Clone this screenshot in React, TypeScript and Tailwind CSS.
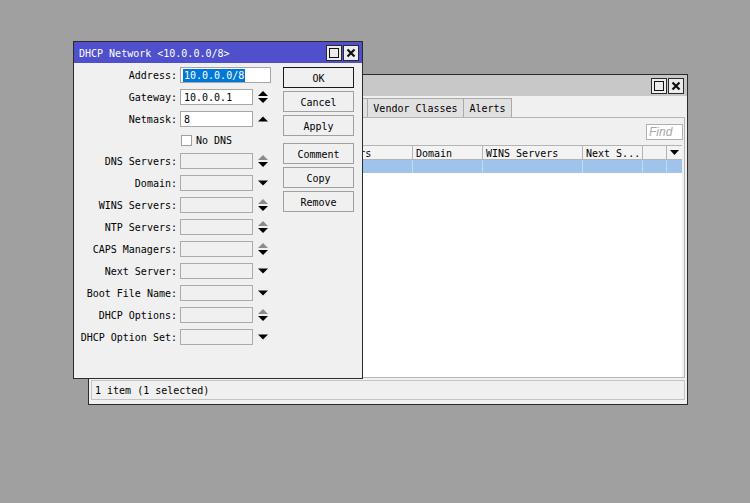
const font = "font-['DejaVu_Sans_Mono',monospace] text-[10px] leading-none text-black";

type SpinKind = "updown" | "up" | "down" | "grayup" | "none";

const Spin = ({ kind }: { kind: SpinKind }) => {
  if (kind === "none") return null;
  const upFill = kind === "grayup" ? "#8c8c8c" : "#000";
  return (
    <svg width="10" height="12" viewBox="0 0 10 12" className="ml-[5px] shrink-0">
      {kind === "up" && <polygon points="0,8.5 5,3.5 10,8.5" fill="#000" />}
      {kind === "down" && <polygon points="0,3.5 10,3.5 5,8.5" fill="#000" />}
      {(kind === "updown" || kind === "grayup") && (
        <>
          <polygon points="0,5 5,0 10,5" fill={upFill} />
          <polygon points="0,7 10,7 5,12" fill="#000" />
        </>
      )}
    </svg>
  );
};

const WinButtons = () => (
  <div className="flex gap-[1px]">
    <div className="w-[16px] h-[16px] border border-[#2a2a2a] bg-[#ececec] flex items-center justify-center">
      <div className="w-[10px] h-[10px] border-[1.5px] border-[#111]" />
    </div>
    <div className="w-[16px] h-[16px] border border-[#2a2a2a] bg-[#ececec] flex items-center justify-center">
      <svg width="10" height="10" viewBox="0 0 10 10">
        <path d="M1.5 1.5 L8.5 8.5 M8.5 1.5 L1.5 8.5" stroke="#111" strokeWidth="2.2" />
      </svg>
    </div>
  </div>
);

type Row = { label: string; value?: string; spin: SpinKind; wide?: boolean; selected?: boolean };

const rows: Row[] = [
  { label: "Address", value: "10.0.0.0/8", spin: "none", wide: true, selected: true },
  { label: "Gateway", value: "10.0.0.1", spin: "updown" },
  { label: "Netmask", value: "8", spin: "up" },
];

const emptyRows: Row[] = [
  { label: "DNS Servers", spin: "grayup" },
  { label: "Domain", spin: "down" },
  { label: "WINS Servers", spin: "grayup" },
  { label: "NTP Servers", spin: "grayup" },
  { label: "CAPS Managers", spin: "grayup" },
  { label: "Next Server", spin: "down" },
  { label: "Boot File Name", spin: "down" },
  { label: "DHCP Options", spin: "grayup" },
  { label: "DHCP Option Set", spin: "down" },
];

const FieldRow = ({ row }: { row: Row }) => (
  <div className="h-[22px] flex items-center">
    <span className="w-[103px] text-right whitespace-nowrap relative top-[1px]">{row.label}:</span>
    <div
      className={`ml-[3px] h-[16px] border flex items-center pl-[2px] ${row.wide ? "w-[91px]" : "w-[73px]"} ${
        row.value !== undefined ? "bg-white border-[#a6a6a6]" : "bg-[#f0f0f0] border-[#ababab]"
      }`}
    >
      {row.value !== undefined &&
        (row.selected ? (
          <span className="bg-[#0078d7] text-white px-[1px] pt-[2px] pb-[1px] relative top-[0.5px]">{row.value}</span>
        ) : (
          <span className="px-[1px] relative top-[1px]">{row.value}</span>
        ))}
    </div>
    <Spin kind={row.spin} />
  </div>
);

const Btn = ({ label, primary }: { label: string; primary?: boolean }) => (
  <div
    className={`h-[21px] w-[71px] flex items-center justify-center bg-[#f0f0f0] border ${
      primary ? "border-[#1a1a1a]" : "border-[#a0a0a0]"
    }`}
  >
    <span className="relative top-[1px]">{label}</span>
  </div>
);

// tabs hidden behind the front window are drawn without their captions
const tabs = [
  { name: "", w: "w-[36px]" },
  { name: "", w: "w-[60px]" },
  { name: "", w: "w-[48px]" },
  { name: "", w: "w-[54px]" },
  { name: "", w: "w-[78px]" },
  { name: "Vendor Classes", w: "w-[96px]" },
  { name: "Alerts", w: "w-[48px]" },
];

const cols = [
  { name: "", w: "w-[10px]" },
  { name: "", w: "w-[110px]" },
  { name: "", w: "w-[90px]" },
  { name: "DNS Servers", w: "w-[111px]" },
  { name: "Domain", w: "w-[70px]" },
  { name: "WINS Servers", w: "w-[100px]" },
  { name: "Next S...", w: "w-[60px]" },
  { name: "", w: "w-[24px]" },
];

export default function App() {
  return (
    <div className={`relative w-[750px] h-[503px] bg-[#a0a0a0] overflow-hidden ${font}`}>
      {/* back window: DHCP Server */}
      <div className="absolute left-[88px] top-[74px] w-[600px] h-[331px] border border-[#2b2b2b] bg-[#f0f0f0] flex flex-col">
        <div className="h-[21px] bg-[#c8c8c8] flex items-center justify-end pl-[5px] pr-[3px] shrink-0">
          <WinButtons />
        </div>
        <div className="flex-1 flex flex-col px-[2px] pt-[2px] pb-[4px]">
          <div className="flex h-[19px] pl-[1px] shrink-0">
            {tabs.map((t, i) => (
              <div
                key={i}
                className={`${t.w} h-full flex items-center justify-center border-t border-r border-[#a9a9a9] ${
                  i === 1 ? "bg-[#f0f0f0]" : "bg-[#e1e1e1]"
                } ${i === 0 ? "border-l" : ""}`}
              >
                <span className="relative top-[1px]">{t.name}</span>
              </div>
            ))}
          </div>
          <div className="h-[261px] border border-[#b4b4b4] flex flex-col">
            <div className="h-[27px] flex items-center justify-end pr-[1px] shrink-0">
              <div className="w-[37px] h-[16px] bg-white border border-[#b0b0b0] flex items-center pl-[2px]">
                <span className="italic text-[#a8a8a8] font-['Liberation_Sans',sans-serif] text-[12px]">Find</span>
              </div>
            </div>
            <div className="w-[590px] flex-1 flex flex-col bg-white">
              <div className="flex h-[15px] bg-[#f3f3f3] border-y border-[#b4b4b4] shrink-0">
                {cols.map((c, i) => (
                  <div key={i} className={`${c.w} h-full border-r border-[#b4b4b4] flex items-center pl-[3px] whitespace-nowrap overflow-hidden`}>
                    <span className="relative top-[1px]">{c.name}</span>
                  </div>
                ))}
                <div className="w-[15px] h-full flex items-center justify-center">
                  <svg width="9" height="5" viewBox="0 0 9 5">
                    <polygon points="0,0 9,0 4.5,5" fill="#000" />
                  </svg>
                </div>
              </div>
              <div className="flex h-[13px] bg-[#9fc3ea] shrink-0">
                {cols.map((c, i) => (
                  <div key={i} className={`${c.w} h-full border-r border-[#c4daf2]`} />
                ))}
                <div className="w-[15px] h-full" />
              </div>
            </div>
          </div>
          <div className="mt-[2px] h-[20px] border border-[#c4c4c4] flex items-center pl-[3px]">
            <span className="relative top-[1px]">1 item (1 selected)</span>
          </div>
        </div>
      </div>

      {/* front window: DHCP Network */}
      <div className="absolute left-[73px] top-[41px] w-[290px] h-[338px] border border-[#2b2b2b] bg-[#f0f0f0] flex flex-col">
        <div className="h-[21px] bg-[#5050cc] flex items-center justify-between pl-[5px] pr-[3px] shrink-0">
          <span className="text-white relative top-[1px]">DHCP Network &lt;10.0.0.0/8&gt;</span>
          <WinButtons />
        </div>
        <div className="flex flex-1">
          <div className="w-[209px] flex flex-col pt-[1px]">
            {rows.map((r) => (
              <FieldRow key={r.label} row={r} />
            ))}
            <div className="h-[20px] flex items-center">
              <div className="w-[103px]" />
              <div className="ml-[4px] w-[11px] h-[11px] bg-white border border-[#a0a0a0]" />
              <span className="ml-[4px] relative top-[1px]">No DNS</span>
            </div>
            {emptyRows.map((r) => (
              <FieldRow key={r.label} row={r} />
            ))}
          </div>
          <div className="w-[71px] flex flex-col pt-[4px]">
            <div className="flex flex-col gap-[3px]">
              <Btn label="OK" primary />
              <Btn label="Cancel" />
              <Btn label="Apply" />
            </div>
            <div className="flex flex-col gap-[3px] mt-[7px]">
              <Btn label="Comment" />
              <Btn label="Copy" />
              <Btn label="Remove" />
            </div>
          </div>
        </div>
      </div>
    </div>
  );
}
